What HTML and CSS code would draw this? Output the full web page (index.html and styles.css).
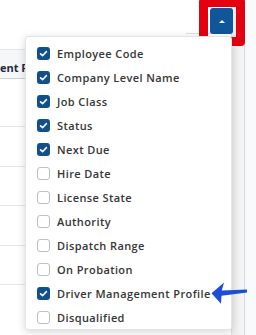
FILE: index.html
```html
<!DOCTYPE html>
<html>
<head>
<meta charset="utf-8">
<link rel="stylesheet" href="styles.css">
</head>
<body>
<div class="page">
  <div class="table-area">
    <div class="thead"><span class="th-text">ent Pr</span></div>
    <div class="row r1"></div>
    <div class="row r2"></div>
    <div class="row r3"></div>
    <div class="row r2"></div>
    <div class="row r3"></div>
  </div>
  <div class="strip"></div>
  <div class="rest"></div>
</div>

<div class="toolbar-line"></div>
<button class="toggle" type="button"><span class="caret"></span></button>
<div class="highlight"></div>

<div class="menu">
  <label class="item"><span class="cb on"><svg viewBox="0 0 13 13"><path d="M3.6 6.8 L5.6 8.7 L9.4 4.6" fill="none" stroke="#fff" stroke-width="1.6" stroke-linecap="round" stroke-linejoin="round"/></svg></span>Employee Code</label>
  <label class="item"><span class="cb on"><svg viewBox="0 0 13 13"><path d="M3.6 6.8 L5.6 8.7 L9.4 4.6" fill="none" stroke="#fff" stroke-width="1.6" stroke-linecap="round" stroke-linejoin="round"/></svg></span>Company Level Name</label>
  <label class="item"><span class="cb on"><svg viewBox="0 0 13 13"><path d="M3.6 6.8 L5.6 8.7 L9.4 4.6" fill="none" stroke="#fff" stroke-width="1.6" stroke-linecap="round" stroke-linejoin="round"/></svg></span>Job Class</label>
  <label class="item"><span class="cb on"><svg viewBox="0 0 13 13"><path d="M3.6 6.8 L5.6 8.7 L9.4 4.6" fill="none" stroke="#fff" stroke-width="1.6" stroke-linecap="round" stroke-linejoin="round"/></svg></span>Status</label>
  <label class="item"><span class="cb on"><svg viewBox="0 0 13 13"><path d="M3.6 6.8 L5.6 8.7 L9.4 4.6" fill="none" stroke="#fff" stroke-width="1.6" stroke-linecap="round" stroke-linejoin="round"/></svg></span>Next Due</label>
  <label class="item"><span class="cb"></span>Hire Date</label>
  <label class="item"><span class="cb"></span>License State</label>
  <label class="item"><span class="cb"></span>Authority</label>
  <label class="item"><span class="cb"></span>Dispatch Range</label>
  <label class="item"><span class="cb"></span>On Probation</label>
  <label class="item"><span class="cb on"><svg viewBox="0 0 13 13"><path d="M3.6 6.8 L5.6 8.7 L9.4 4.6" fill="none" stroke="#fff" stroke-width="1.6" stroke-linecap="round" stroke-linejoin="round"/></svg></span>Driver Management Profile</label>
  <label class="item"><span class="cb"></span>Disqualified</label>
</div>

<svg class="arrow" viewBox="0 0 256 335" width="256" height="335">
  <path d="M211.5 293.3 L224 282.5 L221.8 290.4 L247 289.4 L247 292.4 L221.5 295.8 L221 303.8 Z" fill="#1d4fd6"/>
</svg>
</body>
</html>
```

FILE: styles.css
```css
* { box-sizing: border-box; }
html, body {
  margin: 0;
  padding: 0;
  width: 256px;
  height: 335px;
  overflow: hidden;
  background: #ffffff;
  font-family: "Open Sans", "Liberation Sans", sans-serif;
}
.page {
  display: flex;
  height: 335px;
}
.table-area {
  width: 232px;
  padding-top: 49px;
  border-right: 1px solid #dcdfe4;
  overflow: hidden;
}
.thead {
  height: 30px;
  border-top: 1px solid #e2e5e9;
  border-bottom: 1px solid #cdd1d7;
  background: #f6f7f9;
  padding-top: 11px;
  white-space: nowrap;
}
.th-text {
  display: block;
  width: 25px;
  font-size: 11px;
  line-height: 14px;
  font-weight: 700;
  color: #1e2a45;
}
.row { border-bottom: 1px solid #e3e6ea; }
.r1 { height: 48px; }
.r2 { height: 40px; }
.r3 { height: 39px; }
.strip {
  width: 13px;
  background: linear-gradient(to right, #ececec, #f6f6f6);
  border-right: 1px solid #d3d8df;
}
.rest {
  flex: 1;
  background: #f9fafb;
}
.toolbar-line {
  position: absolute;
  left: 186px;
  top: 33px;
  width: 46px;
  height: 1px;
  background: #dcdfe4;
}
.toggle {
  position: absolute;
  left: 210px;
  top: 8px;
  width: 23px;
  height: 26px;
  padding: 0;
  border: none;
  border-radius: 3px;
  background: #10569a;
  display: flex;
  align-items: center;
  justify-content: center;
}
.caret {
  width: 0;
  height: 0;
  border-left: 3px solid transparent;
  border-right: 3px solid transparent;
  border-bottom: 3px solid #ffffff;
}
.highlight {
  position: absolute;
  left: 199px;
  top: -2px;
  width: 46px;
  height: 48px;
  border: 9px solid #e3000f;
  border-radius: 4px;
}
.menu {
  position: absolute;
  left: 25px;
  top: 36px;
  width: 207px;
  height: 294px;
  background: #ffffff;
  border: 1px solid #e4e4e4;
  border-radius: 3px;
  box-shadow: 0 2px 8px rgba(0, 0, 0, 0.16);
  padding-top: 4px;
  display: flex;
  flex-direction: column;
}
.item {
  height: 24px;
  display: flex;
  align-items: center;
  gap: 7px;
  padding-left: 11px;
  font-size: 11px;
  font-weight: 600;
  letter-spacing: 0.4px;
  color: #353535;
  white-space: nowrap;
}
.cb {
  width: 13px;
  height: 13px;
  flex: none;
  border-radius: 3px;
  border: 1px solid #bcc1c9;
  background: #ffffff;
}
.cb.on {
  border: none;
  background: #12508a;
}
.cb svg { display: block; width: 13px; height: 13px; }
.arrow {
  position: absolute;
  left: 0;
  top: 0;
  pointer-events: none;
}
```
